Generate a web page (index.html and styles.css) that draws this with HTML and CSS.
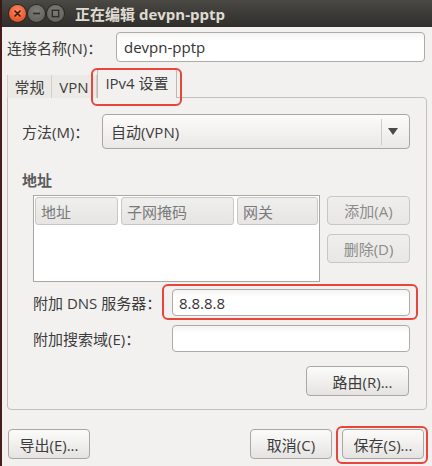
FILE: index.html
```html
<!DOCTYPE html>
<html lang="zh-CN">
<head>
<meta charset="utf-8">
<title>正在编辑 devpn-pptp</title>
<link rel="stylesheet" href="styles.css">
</head>
<body>
<div class="window">
  <div class="titlebar">
    <div class="wbtns">
      <span class="wbtn close"><svg width="17" height="17" viewBox="0 0 17 17"><path d="M6 6 L11 11 M11 6 L6 11" stroke="#3a1a10" stroke-width="1.6" stroke-linecap="round"/></svg></span>
      <span class="wbtn"><svg width="17" height="17" viewBox="0 0 17 17"><path d="M5 8.5 H12" stroke="#2e2d2a" stroke-width="1.6"/></svg></span>
      <span class="wbtn"><svg width="17" height="17" viewBox="0 0 17 17"><rect x="5.3" y="5.3" width="6.4" height="6.4" fill="none" stroke="#2e2d2a" stroke-width="1.4"/></svg></span>
    </div>
    <div class="title">正在编辑 devpn-pptp</div>
  </div>
  <div class="dialog">
    <div class="name-row">
      <label class="name-label">连接名称(N)<span class="colon">：</span></label>
      <div class="entry name-entry">devpn-pptp</div>
    </div>
    <div class="tabs">
      <div class="tab">常规</div>
      <div class="tab">VPN</div>
      <div class="tab active mark mark-tab">IPv4 设置</div>
    </div>
    <div class="panel">
      <div class="method-row">
        <span class="label method-label">方法(M)<span class="colon">：</span></span>
        <div class="combo">
          <span class="combo-text">自动(VPN)</span>
          <span class="combo-sep"></span>
          <svg class="combo-arrow" width="10" height="8" viewBox="0 0 10 8"><path d="M0 0 H10 L5 7 Z" fill="#4a4946"/></svg>
        </div>
      </div>
      <div class="section-title">地址</div>
      <div class="addr-row">
        <div class="table">
          <div class="thead">
            <div class="th">地址</div>
            <div class="th">子网掩码</div>
            <div class="th">网关</div>
          </div>
        </div>
        <div class="side-btns">
          <div class="btn disabled">添加(A)</div>
          <div class="btn disabled">删除(D)</div>
        </div>
      </div>
      <div class="field-row dns-row">
        <span class="label">附加 DNS 服务器<span class="colon">：</span></span>
        <div class="entry field-entry mark mark-dns">8.8.8.8</div>
      </div>
      <div class="field-row search-row">
        <span class="label">附加搜索域(E)<span class="colon">：</span></span>
        <div class="entry field-entry"></div>
      </div>
      <div class="route-row">
        <div class="btn route-btn">路由(R)...</div>
      </div>
    </div>
    <div class="bottom">
      <div class="btn bottom-btn">导出(E)...</div>
      <div class="spacer"></div>
      <div class="btn bottom-btn">取消(C)</div>
      <div class="btn bottom-btn mark mark-save">保存(S)...</div>
    </div>
  </div>
</div>
</body>
</html>
```
FILE: styles.css
```css
html, body {
  margin: 0;
  padding: 0;
  background: #f2f1f0;
}
.window {
  width: 432px;
  height: 466px;
  overflow: hidden;
  font-family: "Open Sans", "Noto Sans CJK SC", sans-serif;
  font-size: 15px;
  color: #3c3c3c;
}
.colon {
  font-family: "Noto Sans CJK TC", sans-serif;
}
.titlebar {
  height: 27px;
  display: flex;
  align-items: center;
  background: linear-gradient(to bottom, #4a4944 0%, #3d3c38 45%, #302f2b 100%);
  box-sizing: border-box;
  border-left: 2px solid #3a1818;
  padding-left: 7px;
}
.wbtns {
  display: flex;
  gap: 2px;
}
.wbtn {
  width: 17px;
  height: 17px;
  border-radius: 50%;
  background: radial-gradient(circle at 50% 35%, #7d7c77 0%, #66655f 70%, #57564f 100%);
  box-shadow: 0 0 0 1px #2a2926;
  display: block;
}
.wbtn svg { display: block; }
.wbtn.close {
  background: radial-gradient(circle at 50% 35%, #f78e64 0%, #ef5d34 60%, #d9461f 100%);
}
.title {
  margin-left: 11px;
  color: #dfdbd2;
  font-weight: bold;
  font-size: 15px;
  line-height: 20px;
}
.dialog {
  height: 439px;
  box-sizing: border-box;
  border-left: 2px solid #4a1c1c;
  padding: 5px 5px 0 5px;
  display: flex;
  flex-direction: column;
}
.name-row {
  display: flex;
  align-items: center;
  height: 30px;
  margin-right: 2px;
}
.name-label {
  width: 109px;
  flex: none;
  white-space: nowrap;
}
.entry {
  box-sizing: border-box;
  background: linear-gradient(to bottom, #f4f4f4 0%, #ffffff 30%, #ffffff 100%);
  border: 1px solid #aeaba6;
  border-radius: 4px;
  display: flex;
  align-items: center;
  padding-left: 7px;
  color: #333;
}
.name-entry {
  flex: 1;
  height: 30px;
}
.tabs {
  display: flex;
  align-items: flex-end;
  height: 29px;
  margin-top: 7px;
  position: relative;
  z-index: 1;
}
.tab {
  height: 23px;
  box-sizing: border-box;
  display: flex;
  align-items: center;
  justify-content: center;
  background: #eceae7;
  border-right: 1px solid #d3d0cb;
  line-height: 20px;
}
.tab:nth-child(1) { width: 45px; border-left: 1px solid #d3d0cb; }
.tab:nth-child(2) { width: 45px; }
.tab.active {
  width: 80px;
  height: 30px;
  background: #f2f1f0;
  border: 1px solid #bdbab5;
  border-bottom: none;
  border-radius: 4px 4px 0 0;
  padding-bottom: 2px;
}
.mark { position: relative; }
.mark::after {
  content: "";
  position: absolute;
  border: 2px solid #e8453c;
  border-radius: 6px;
  pointer-events: none;
}
.mark-tab::after { left: -7px; right: -6px; top: -1px; bottom: -8px; }
.mark-dns::after { left: -11px; right: -9px; top: -6px; bottom: -5px; }
.mark-save::after { left: -7px; right: -5px; top: -4px; bottom: -6px; }
.panel {
  margin-top: -1px;
  border: 1px solid #c3c0bb;
  border-radius: 0 4px 4px 4px;
  height: 313px;
  box-sizing: border-box;
  padding: 16px 16px 0 14px;
  background: #f2f1f0;
}
.label { white-space: nowrap; }
.method-row {
  display: flex;
  align-items: center;
  height: 35px;
}
.method-label { width: 80px; flex: none; }
.combo {
  flex: 1;
  height: 35px;
  box-sizing: border-box;
  border: 1px solid #a9a6a1;
  border-radius: 4px;
  background: linear-gradient(to bottom, #fbfbfa 0%, #f3f2f1 50%, #e9e8e6 100%);
  display: flex;
  align-items: center;
  padding-left: 8px;
}
.combo-text { flex: 1; }
.combo-sep {
  width: 1px;
  height: 26px;
  background: #cfccc8;
  margin-right: 6px;
}
.combo-arrow { margin-right: 11px; margin-top: 1px; }
.section-title {
  font-weight: bold;
  color: #5a5a5a;
  line-height: 20px;
  margin-top: 21px;
}
.addr-row {
  display: flex;
  margin-top: 5px;
  margin-left: 11px;
  gap: 7px;
}
.table {
  width: 288px;
  height: 87px;
  box-sizing: border-box;
  border: 1px solid #aaa7a2;
  background: #fff;
  padding: 1px;
}
.thead {
  display: grid;
  grid-template-columns: 83px 113px 81px;
  gap: 3px;
}
.th {
  height: 28px;
  box-sizing: border-box;
  border: 1px solid #c9c7c3;
  border-radius: 3px;
  background: linear-gradient(to bottom, #efefee, #e6e5e4);
  color: #7a7a7a;
  display: flex;
  align-items: center;
  padding-left: 5px;
}
.side-btns {
  display: flex;
  flex-direction: column;
  gap: 9px;
  margin-top: 1px;
}
.btn {
  box-sizing: border-box;
  border: 1px solid #aaa7a2;
  border-radius: 4px;
  background: linear-gradient(to bottom, #fbfbfa 0%, #f1f0ef 50%, #e4e3e1 100%);
  display: flex;
  align-items: center;
  justify-content: center;
  height: 29px;
  color: #3c3c3c;
  white-space: nowrap;
}
.side-btns .btn { width: 83px; }
.btn.disabled {
  color: #8b8b8b;
  border-color: #c9c7c3;
  background: linear-gradient(to bottom, #efeeed, #e8e7e5);
}
.field-row {
  display: flex;
  align-items: center;
  margin-left: 11px;
}
.field-row .label { width: 139px; flex: none; }
.dns-row { margin-top: 7px; }
.search-row { margin-top: 9px; }
.field-entry {
  flex: 1;
  height: 27px;
  padding-left: 6px;
}
.route-row {
  display: flex;
  justify-content: flex-end;
  margin-top: 14px;
  margin-right: 1px;
}
.route-btn { width: 103px; height: 30px; padding-left: 10px; }
.bottom {
  display: flex;
  margin-top: 19px;
  margin-left: 1px;
  margin-right: 3px;
  gap: 10px;
}
.spacer { flex: 1; }
.bottom-btn { width: 82px; height: 30px; }
```
